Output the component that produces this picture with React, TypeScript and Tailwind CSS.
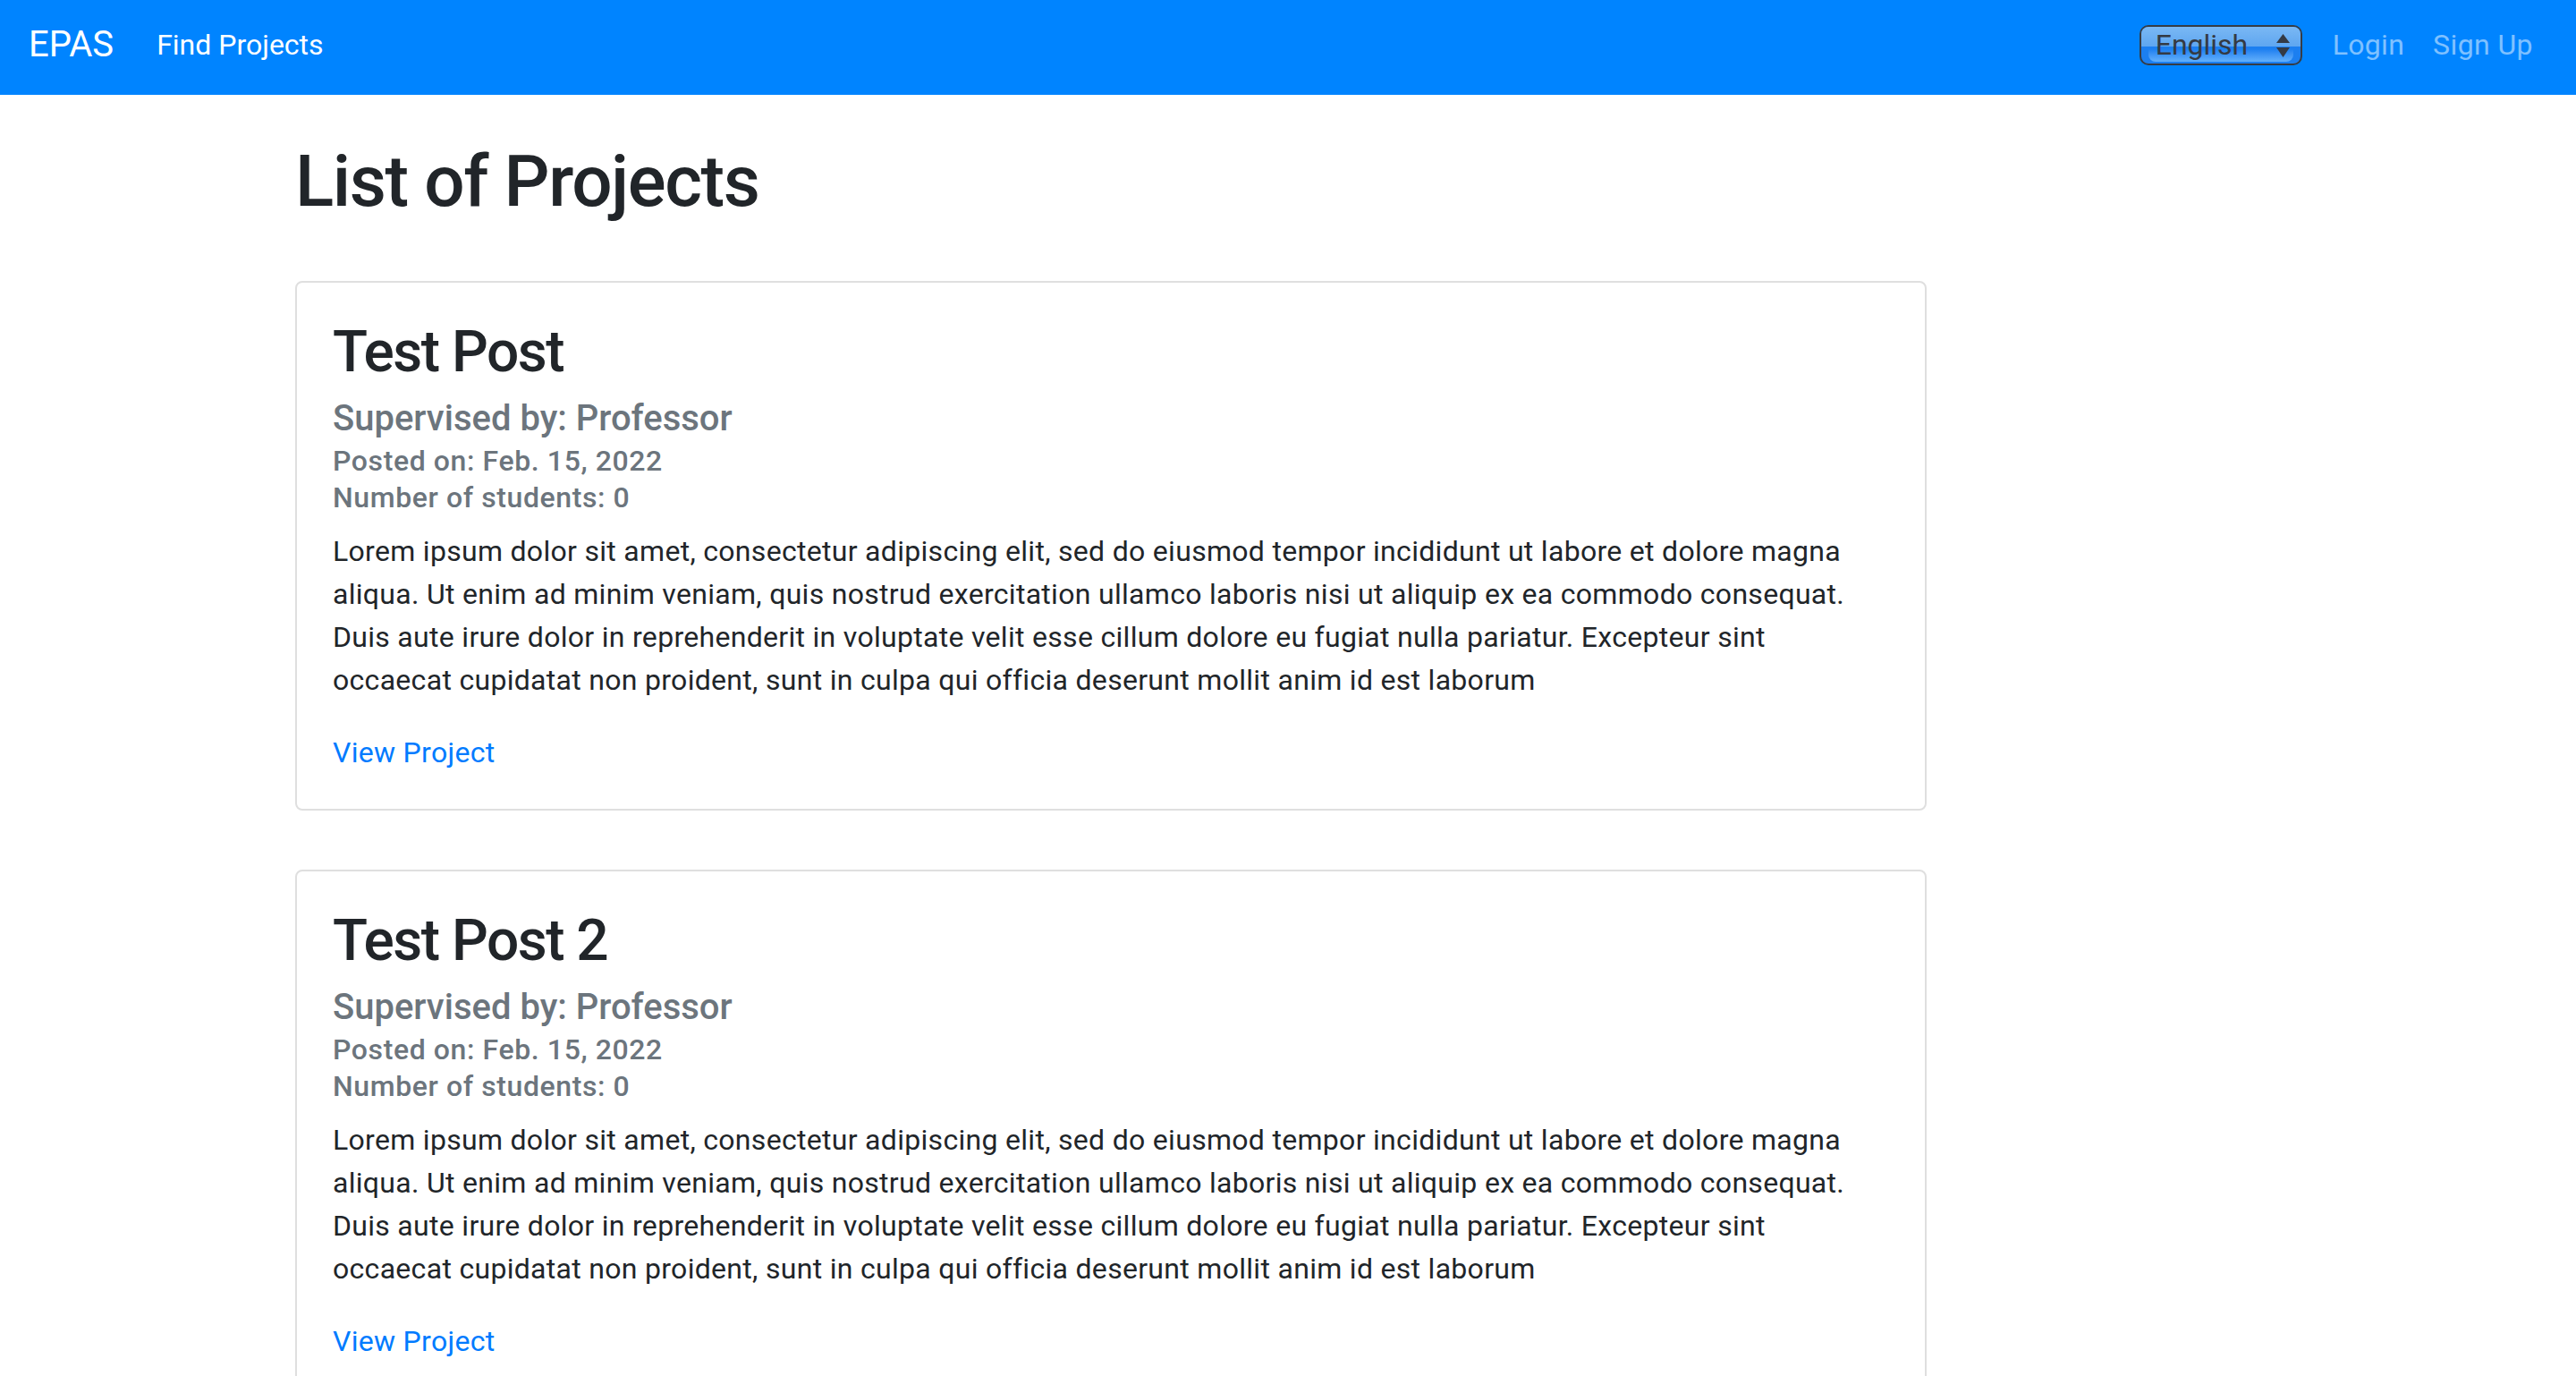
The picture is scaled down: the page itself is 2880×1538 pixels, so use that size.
import React from 'react';

const lorem =
  'Lorem ipsum dolor sit amet, consectetur adipiscing elit, sed do eiusmod tempor incididunt ut labore et dolore magna aliqua. Ut enim ad minim veniam, quis nostrud exercitation ullamco laboris nisi ut aliquip ex ea commodo consequat. Duis aute irure dolor in reprehenderit in voluptate velit esse cillum dolore eu fugiat nulla pariatur. Excepteur sint occaecat cupidatat non proident, sunt in culpa qui officia deserunt mollit anim id est laborum';

const projects = [
  { title: 'Test Post', supervisor: 'Professor', posted: 'Feb. 15, 2022', students: 0 },
  { title: 'Test Post 2', supervisor: 'Professor', posted: 'Feb. 15, 2022', students: 0 },
];

// aqua-looking language picker
const LanguageSelect: React.FC = () => (
  <div className="relative w-[182px] h-[45px] rounded-[10px] border-2 border-[#363c45] overflow-hidden bg-[#1c7ff0] flex items-center">
    <div className="absolute left-0 right-0 top-0 h-[22px] bg-gradient-to-b from-[#7ab8f4] to-[#5ea6f0]"></div>
    <div className="absolute left-[8px] right-[8px] bottom-[2px] h-[14px] rounded-b-[8px] bg-gradient-to-b from-[#1c7ff0] to-[#62b0fb]"></div>
    <span className="relative pl-[16px] text-[32px] leading-none text-[#343a44]">English</span>
    <svg className="absolute right-[12px] top-[8px]" width="15" height="27" viewBox="0 0 15 27">
      <path d="M7.5 0 L15 10 L0 10 Z" fill="#343a44" />
      <path d="M7.5 26 L15 15 L0 15 Z" fill="#343a44" />
    </svg>
  </div>
);

const ProjectCard: React.FC<{ p: (typeof projects)[number] }> = ({ p }) => (
  <div className="w-[1824px] border-2 border-[#dfdfdf] rounded-[8px] px-[40px] pt-[40px] pb-[39px] mb-[66px]">
    <h2 className="text-[64px] leading-[1.2] font-medium tracking-[-1.5px] text-[#212529]">{p.title}</h2>
    <h5 className="mt-[11px] text-[40px] leading-[48px] font-medium text-[#6c757d]">
      Supervised by: {p.supervisor}
    </h5>
    <h6 className="mt-[3px] text-[32px] leading-[41px] font-medium tracking-[0.6px] text-[#6c757d]">
      Posted on: {p.posted}
    </h6>
    <h6 className="text-[32px] leading-[41px] font-medium tracking-[0.6px] text-[#6c757d]">
      Number of students: {p.students}
    </h6>
    <p className="mt-[15px] text-[32px] leading-[48px] tracking-[0.3px] text-[#212529]">{lorem}</p>
    <a href="#" className="block mt-[33px] text-[32px] leading-[48px] tracking-[0.3px] text-[#007bff]">
      View Project
    </a>
  </div>
);

const App: React.FC = () => {
  return (
    <div className="min-h-screen bg-white font-['Roboto',sans-serif]">
      <nav className="h-[106px] bg-[#0084ff] flex items-center px-[32px] pb-[6px]">
        <a href="#" className="text-[40px] leading-none text-white mr-[32px]">EPAS</a>
        <a href="#" className="px-[16px] text-[32px] leading-none text-white">Find Projects</a>
        <div className="ml-auto flex items-center">
          <div className="mr-[18px]">
            <LanguageSelect />
          </div>
          <a href="#" className="px-[16px] text-[32px] leading-none tracking-[0.3px] text-white/50">Login</a>
          <a href="#" className="px-[16px] text-[32px] leading-none tracking-[0.4px] text-white/50">Sign Up</a>
        </div>
      </nav>

      <main className="pl-[330px] pt-[49px]">
        <h1 className="text-[80px] leading-[1.2] font-medium tracking-[-1.4px] text-[#212529] mb-[63px]">
          List of Projects
        </h1>
        {projects.map((p) => (
          <ProjectCard key={p.title} p={p} />
        ))}
      </main>
    </div>
  );
};

export default App;
